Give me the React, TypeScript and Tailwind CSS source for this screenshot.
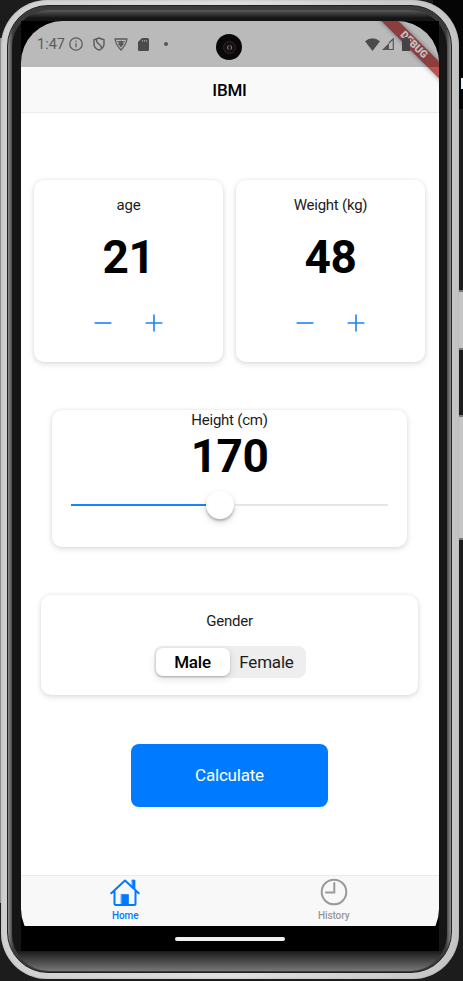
import type { ReactNode } from "react";

function Card({ className, children }: { className: string; children: ReactNode }) {
  return (
    <section className={`flex flex-col items-center rounded-[10px] bg-white shadow-[0_2px_6px_rgba(0,0,0,0.13),0_0_4px_rgba(0,0,0,0.06)] ${className}`}>
      {children}
    </section>
  );
}

function Counter({ label, value }: { label: string; value: number }) {
  return (
    <Card className="h-[182px] w-[189px]">
      <h2 className="mt-[15px] text-[15px] leading-[20px] tracking-[-0.24px] text-[#1c1c1c]">{label}</h2>
      <p className="mt-[15px] text-[46px] leading-[54px] font-bold tracking-[-0.3px]">{value}</p>
      <div className="mt-[30px] flex gap-[33px] text-[#1a82ff]">
        <button aria-label="decrease">
          <svg className="size-[18px]" viewBox="0 0 18 18" stroke="currentColor" strokeWidth="1.6"><path d="M.6 9h16.8" /></svg>
        </button>
        <button aria-label="increase">
          <svg className="size-[18px]" viewBox="0 0 18 18" stroke="currentColor" strokeWidth="1.6"><path d="M.6 9h16.8M9 .6v16.8" /></svg>
        </button>
      </div>
    </Card>
  );
}

function StatusBar() {
  return (
    <div className="absolute inset-x-0 top-0 flex h-[46px] items-center bg-black/25 pl-[16px] text-[#5b5b5b]">
      <span className="w-[32px] pt-px text-[14.5px]">1:47</span>
      <svg className="size-[14px]" viewBox="0 0 14 14" fill="none" stroke="currentColor" strokeWidth="1.3">
        <circle cx="7" cy="7" r="6.2" /><path d="M7 6.2v4M7 3.7V5" />
      </svg>
      <svg className="ml-[10px] h-[14px] w-[12px]" viewBox="0 0 12 14" fill="none" stroke="currentColor" strokeWidth="1.4">
        <path d="M6 1 11 2.8V7c0 3-2 5-5 6.1C3 12 1 10 1 7V2.8ZM3.500 2.300c-1 4.500 5 4.700 5 8.700" />
      </svg>
      <svg className="ml-[9px] h-[13px] w-[14px]" viewBox="0 0 14 13" fill="none" stroke="currentColor" strokeWidth="1.3">
        <path d="M1 1h12q-1 6-6 11Q2 7 1 1Z" strokeLinejoin="round" /><path d="M7 2.500 9.500 4v2.500L7 9.500 4.500 6.500V4Z" fill="currentColor" stroke="none" /><path d="M3 3.500h8" strokeWidth=".8" />
      </svg>
      <svg className="ml-[10px] h-[13px] w-[11px] text-[#4b4b4b]" viewBox="0 0 11 13" fill="currentColor">
        <path d="M4 0h5.500Q11 0 11 1.500v10Q11 13 9.500 13h-8Q0 13 0 11.500V4Z" /><path d="M4.500 2v1.800M6.500 2v1.800M8.500 2v1.800" stroke="#999" strokeWidth="1" />
      </svg>
      <span className="ml-[15px] size-[4px] rounded-full bg-[#555]" />
      <svg className="ml-[197px] h-[13px] w-[15px] text-[#4b4b4b]" viewBox="0 0 15 13" fill="currentColor"><path d="M0 3.200Q7.500-2.700 15 3.200L7.500 13Z" /></svg>
      <svg className="ml-[2px] h-[12px] w-[12px]" viewBox="0 0 12 12"><path d="M0 12 7 5v7Z" fill="#555" /><path d="M7 5 11.300.8v10.700H7" fill="none" stroke="#555" strokeWidth="1.200" /></svg>
      <svg className="ml-[8px] h-[14px] w-[8px]" viewBox="0 0 8 14" fill="#444"><path d="M2.500 0h3v1.200H8V14H0V1.200h2.500Z" /></svg>
    </div>
  );
}

function AppScreen() {
  return (
    <div className="relative flex h-[930px] w-[418px] flex-col overflow-hidden rounded-[42px]">
      <header className="flex h-[91.500px] shrink-0 items-end justify-center border-b-[1.500px] border-[#ebebeb] bg-[#f9f9f9] pr-px pb-[12px]">
        <h1 className="text-[17px] leading-[20px] font-medium tracking-[-0.2px]">IBMI</h1>
      </header>
      <main className="flex min-h-0 flex-1 flex-col items-center bg-white pr-px">
        <div className="mt-[67.500px] flex gap-[13px]">
          <Counter label="age" value={21} />
          <Counter label="Weight (kg)" value={48} />
        </div>
        <Card className="mt-[48px] h-[137px] w-[355px]">
          <h2 className="text-[15px] leading-[20px] tracking-[-0.24px] text-[#1c1c1c]">Height (cm)</h2>
          <p className="-mt-px text-[46px] leading-[54px] font-bold tracking-[-0.5px]">170</p>
          <div className="mt-[7px] flex h-[30px] w-[317px] items-center">
            <span className="h-[2px] w-[135px] bg-[#1a82ff]" />
            <span className="size-[28px] rounded-full bg-white shadow-[0_3px_6px_rgba(0,0,0,0.18),0_2px_2px_rgba(0,0,0,0.2)]" />
            <span className="h-[2px] flex-1 bg-[#e5e5e5]" />
          </div>
        </Card>
        <Card className="mt-[48px] h-[100px] w-[377px]">
          <h2 className="mt-[16px] text-[15px] leading-[20px] tracking-[-0.24px] text-[#1c1c1c]">Gender</h2>
          <div className="mt-[15px] flex h-[32px] w-[152px] items-center rounded-[8px] bg-[#eee] p-[2px] text-[17px] tracking-[-0.2px]">
            <span className="flex h-[28px] w-[74px] items-center justify-center rounded-[7px] bg-white pt-[2px] font-medium shadow-[0_3px_8px_rgba(0,0,0,0.12),0_1px_2px_rgba(0,0,0,0.18)]">Male</span>
            <span className="flex flex-1 justify-center pt-[2px] text-[#1c1c1c]">Female</span>
          </div>
        </Card>
        <button className="mt-[49px] h-[63px] w-[197px] rounded-[8px] bg-[#007bff] text-[17px] tracking-[-0.2px] text-white">Calculate</button>
      </main>
      <nav className="grid h-[51px] shrink-0 grid-cols-2 border-t border-[#ececec] bg-[#f8f8f8] pr-px text-[10px] leading-[12px] font-medium tracking-[-0.1px]">
        <a className="flex flex-col items-center pt-[3px] text-[#007bff]">
          <svg className="h-[28px] w-[30px]" viewBox="0 0 30 28" fill="none" stroke="currentColor" strokeWidth="2" strokeLinecap="round" strokeLinejoin="round">
            <path d="M1.300 14.300 15 1.600l13.700 12.700M4.500 12.500v12Q4.500 26 6 26h18q1.500 0 1.500-1.500v-12" />
            <path d="M22.300 1h2.700v9l-2.700-2ZM11.500 15.500h7V26h-7Z" fill="currentColor" strokeWidth=".7" />
          </svg>
          <span className="mt-[3px]">Home</span>
        </a>
        <a className="flex flex-col items-center pt-[2px] text-[#999]">
          <svg className="size-[28px]" viewBox="0 0 28 28" fill="none" stroke="currentColor" strokeWidth="2"><circle cx="14" cy="14" r="12.300" /><path d="M14.300 5v9.500H6" strokeLinecap="round" /></svg>
          <span className="mt-[4px]">History</span>
        </a>
      </nav>
      <div className="flex h-[25px] shrink-0 items-center justify-center bg-black">
        <span className="h-[4px] w-[110px] rounded-full bg-[#f0f0f0]" />
      </div>
      <div className="absolute top-[18px] left-[343px] flex h-[11.500px] w-[100px] rotate-45 items-center justify-center bg-[#bd5252] text-[10.500px] font-black text-white shadow-[0_0_5px_rgba(0,0,0,0.400)]">DEBUG</div>
      <StatusBar />
      <div className="absolute top-[13px] left-[195px] flex size-[26px] items-center justify-center rounded-full bg-[#090909]">
        <span className="flex size-[13px] items-center justify-center rounded-full border border-[#292929] bg-[#141014]"><span className="size-[5px] rounded-full border-l border-r border-l-[#a56a3c] border-r-[#9a669c] bg-[#24192a]" /></span>
      </div>
    </div>
  );
}

export default function App() {
  return (
    <div className="relative h-[981px] w-[463px] overflow-hidden bg-[#1c1c1c] font-[Roboto,'Liberation_Sans',sans-serif] text-black">
      <div className="absolute top-[38px] left-0 h-[865px] w-[3px] bg-[#8e8e8e]" />
      <div className="absolute top-0 right-0 h-[109px] w-[30px] bg-[#050505]" />
      <div className="absolute top-[78px] right-0 h-[11px] w-[2px] bg-[#e8f4ff]" />
      <div className="absolute top-[290px] right-0 h-[60px] w-[5px] border-y-2 border-[#777] bg-[#c5c5c5]" />
      <div className="absolute top-[415px] right-0 h-[125px] w-[5px] border-y-2 border-[#777] bg-[#c5c5c5]" />
      <div className="relative ml-px h-[979px] w-[458px] rounded-[46px] bg-linear-to-r from-[#cfcfcf] via-[#e0e0e0] to-[#c4c4c4] pt-[5px] pr-[7px] pb-[6px] pl-[6px] shadow-[inset_0_0_2px_#aaa]">
        <div className="h-full rounded-[41px] border border-[#222] bg-[linear-gradient(to_right,#8e8e8e_0,#3a3a3a_5px,#3a3a3a_calc(100%-5px),#8e8e8e_100%)] p-[4px]">
          <div className="h-[961px] rounded-[37px] bg-[linear-gradient(to_bottom,#5a5a5a_0,#151515_8px,#151515_940px,#777_961px)] pt-[11px] pl-[9px]">
            <div className="h-[930px] w-[418px] bg-black"><AppScreen /></div>
          </div>
        </div>
      </div>
    </div>
  );
}
